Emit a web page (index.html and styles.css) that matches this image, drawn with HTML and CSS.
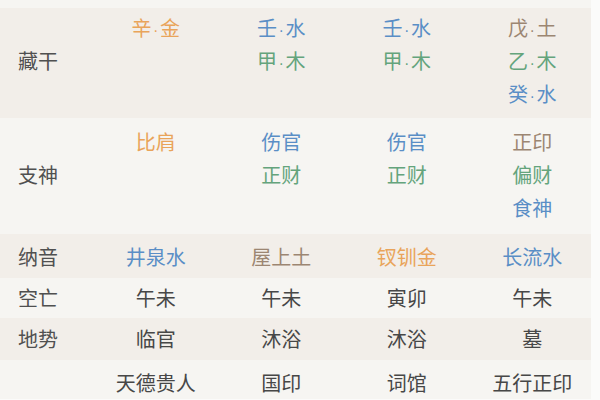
FILE: index.html
```html
<!DOCTYPE html>
<html lang="zh">
<head>
<meta charset="utf-8">
<link rel="stylesheet" href="styles.css">
</head>
<body>
<div class="table">
  <div class="row sliver light"></div>
  <div class="row r1 beige">
    <div class="label">藏干</div>
    <div class="cell"><span class="o">辛<i class="dot">·</i>金</span></div>
    <div class="cell"><span class="b">壬<i class="dot">·</i>水</span><span class="g">甲<i class="dot">·</i>木</span></div>
    <div class="cell"><span class="b">壬<i class="dot">·</i>水</span><span class="g">甲<i class="dot">·</i>木</span></div>
    <div class="cell"><span class="t">戊<i class="dot">·</i>土</span><span class="g">乙<i class="dot">·</i>木</span><span class="b">癸<i class="dot">·</i>水</span></div>
  </div>
  <div class="row r2 light">
    <div class="label">支神</div>
    <div class="cell"><span class="o">比肩</span></div>
    <div class="cell"><span class="b">伤官</span><span class="g">正财</span></div>
    <div class="cell"><span class="b">伤官</span><span class="g">正财</span></div>
    <div class="cell"><span class="t">正印</span><span class="g">偏财</span><span class="b">食神</span></div>
  </div>
  <div class="row r3 beige">
    <div class="label">纳音</div>
    <div class="cell"><span class="b">井泉水</span></div>
    <div class="cell"><span class="t">屋上土</span></div>
    <div class="cell"><span class="o">钗钏金</span></div>
    <div class="cell"><span class="b">长流水</span></div>
  </div>
  <div class="row r4 light">
    <div class="label">空亡</div>
    <div class="cell"><span>午未</span></div>
    <div class="cell"><span>午未</span></div>
    <div class="cell"><span>寅卯</span></div>
    <div class="cell"><span>午未</span></div>
  </div>
  <div class="row r5 beige">
    <div class="label">地势</div>
    <div class="cell"><span>临官</span></div>
    <div class="cell"><span>沐浴</span></div>
    <div class="cell"><span>沐浴</span></div>
    <div class="cell"><span>墓</span></div>
  </div>
  <div class="row r6 light">
    <div class="label"></div>
    <div class="cell"><span>天德贵人</span></div>
    <div class="cell"><span>国印</span></div>
    <div class="cell"><span>词馆</span></div>
    <div class="cell"><span>五行正印</span></div>
  </div>
</div>
</body>
</html>
```

FILE: styles.css
```css
html, body {
  margin: 0;
  padding: 0;
  background: #fbfbfa;
  height: 100%;
  overflow: hidden;
}
.table {
  width: 591px;
  font-family: "Noto Sans CJK SC", "Noto Sans", sans-serif;
  font-size: 20px;
  color: #474747;
}
.row {
  display: grid;
  grid-template-columns: 93px repeat(4, 125.5px);
  align-items: start;
}
.sliver { height: 8px; }
.beige { background: #f2eee9; }
.light { background: #f6f5f2; }
.label {
  align-self: center;
  padding-left: 18px;
  color: #505050;
  line-height: 33px;
}
.cell {
  display: flex;
  flex-direction: column;
  align-items: center;
  line-height: 33px;
}
.cell span {
  height: 33px;
}
.dot {
  font-style: normal;
  font-family: "DejaVu Sans", sans-serif;
  font-size: 14px;
  line-height: 0;
  padding: 0 2px;
}
.r1 { padding: 3px 0 8px; }
.r2 { padding: 7px 0 10px; }
.r3 { padding: 6px 0 5px; }
.r4 { padding: 3px 0 4px; }
.r5 { padding: 4px 0 5px; }
.r6 { padding: 6px 0 0; }
.o { color: #e9a45a; }
.b { color: #5a8ec6; }
.g { color: #64a47c; }
.t { color: #9c8672; }
```
